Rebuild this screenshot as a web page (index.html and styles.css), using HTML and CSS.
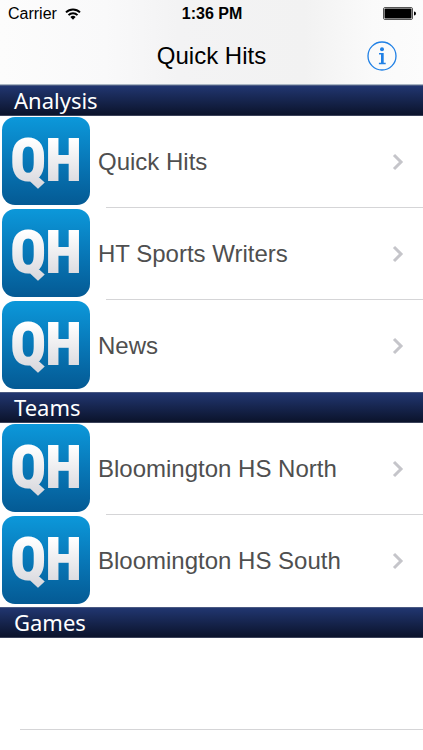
FILE: index.html
```html
<!DOCTYPE html>
<html lang="en">
<head>
<meta charset="utf-8">
<meta name="viewport" content="width=device-width, initial-scale=1">
<title>Quick Hits</title>
<link rel="stylesheet" href="styles.css">
</head>
<body>
<svg class="defs" aria-hidden="true">
  <defs>
    <linearGradient id="tile" x1="0" y1="0" x2="0" y2="1">
      <stop offset="0" stop-color="#0c98da"/>
      <stop offset="0.5" stop-color="#0878b8"/>
      <stop offset="1" stop-color="#045a94"/>
    </linearGradient>
    <linearGradient id="letters" x1="0" y1="0" x2="0" y2="1">
      <stop offset="0.2" stop-color="#ffffff"/>
      <stop offset="1" stop-color="#d2d2d8"/>
    </linearGradient>
    <symbol id="logo" viewBox="0 0 88 88">
      <rect width="88" height="88" rx="13" fill="url(#tile)"/>
      <text class="logo-text" x="44" y="63" text-anchor="middle" fill="url(#letters)" stroke="url(#letters)" stroke-width="2">QH</text>
    </symbol>
    <symbol id="chevron" viewBox="0 0 12 18">
      <path d="M2 2 9 9 2 16" fill="none" stroke="#c5c5ca" stroke-width="3"/>
    </symbol>
  </defs>
</svg>
<header class="top">
  <div class="status">
    <div class="carrier">
      <span>Carrier</span>
      <svg class="wifi" viewBox="0 0 16 12" aria-hidden="true">
        <path d="M1 4.4a10 10 0 0 1 14 0M3.5 7.1a6.4 6.4 0 0 1 9 0" fill="none" stroke="#000" stroke-width="2"/>
        <path d="M5.4 9a3.8 3.8 0 0 1 5.2 0L8 11.7Z"/>
      </svg>
    </div>
    <span class="time">1:36 PM</span>
    <svg class="battery" viewBox="0 0 33 13" aria-hidden="true">
      <rect x="0.5" y="0.5" width="29" height="12" rx="1.5" fill="#fff" stroke="#555"/>
      <rect x="1.5" y="1.5" width="27" height="10" rx="1"/>
      <path d="M31 4.5a2 2 0 0 1 0 4Z"/>
    </svg>
  </div>
  <div class="nav">
    <h1>Quick Hits</h1>
    <button class="info" type="button" aria-label="Information">
      <svg viewBox="0 0 30 30" aria-hidden="true" fill="#2080e5">
        <circle cx="15" cy="15" r="14" fill="none" stroke="#2080e5" stroke-width="1.3"/>
        <circle cx="15" cy="8.2" r="2"/>
        <path d="M12 12h4.7v9.8h2v1.4h-6.8v-1.4h2.1v-8.4H12Z"/>
      </svg>
    </button>
  </div>
</header>
<main>
  <section>
    <h2>Analysis</h2>
    <ul>
      <li><a href="#quick-hits"><svg class="logo"><use href="#logo"/></svg><span class="label">Quick Hits</span><svg class="chevron"><use href="#chevron"/></svg></a></li>
      <li><a href="#writers"><svg class="logo"><use href="#logo"/></svg><span class="label">HT Sports Writers</span><svg class="chevron"><use href="#chevron"/></svg></a></li>
      <li><a href="#news"><svg class="logo"><use href="#logo"/></svg><span class="label">News</span><svg class="chevron"><use href="#chevron"/></svg></a></li>
    </ul>
  </section>
  <section>
    <h2>Teams</h2>
    <ul>
      <li><a href="#north"><svg class="logo"><use href="#logo"/></svg><span class="label">Bloomington HS North</span><svg class="chevron"><use href="#chevron"/></svg></a></li>
      <li><a href="#south"><svg class="logo"><use href="#logo"/></svg><span class="label">Bloomington HS South</span><svg class="chevron"><use href="#chevron"/></svg></a></li>
    </ul>
  </section>
  <section>
    <h2>Games</h2>
    <div class="blank"></div>
  </section>
</main>
</body>
</html>
```
FILE: styles.css
```css
* { box-sizing: border-box; }

body {
  margin: 0;
  background: #fff;
  color: #000;
  font-family: "Liberation Sans", Arial, sans-serif;
}

h1, h2, ul { margin: 0; padding: 0; font-weight: 400; }
svg { display: block; flex: none; }
.defs { position: absolute; width: 0; height: 0; }

.top {
  background: linear-gradient(90deg, #fcfcfc 0%, #f9f9fa 25%, #f3f3f4 42%, #f2f2f2 72%, #fafafa 88%, #fcfcfc 100%);
  border-bottom: 1px solid #a9b6c4;
}

.status {
  display: grid;
  grid-template-columns: 1fr auto 1fr;
  align-items: center;
  height: 27px;
  padding: 0 7px 0 8px;
  font-size: 16px;
  line-height: 18px;
}
.carrier { display: flex; align-items: center; gap: 8px; }
.wifi { width: 16px; height: 12px; }
.time { font-weight: 700; }
.battery { width: 33px; height: 13px; justify-self: end; }

.nav {
  display: grid;
  grid-template-columns: 1fr auto 1fr;
  align-items: center;
  height: 57px;
  padding: 0 26px;
}
h1 { grid-column: 2; font-size: 24px; line-height: 28px; }
.info {
  justify-self: end;
  width: 30px;
  height: 30px;
  padding: 0;
  border: 0;
  background: none;
}

h2 {
  padding-left: 14px;
  background: linear-gradient(#213670, #0b132b);
  border-top: 1px solid #4a5982;
  border-bottom: 1px solid #3b425a;
  color: #fff;
  font-family: "Noto Sans", sans-serif;
  font-size: 22px;
  line-height: 29px;
}

ul { list-style: none; }
a {
  display: flex;
  position: relative;
  align-items: center;
  height: 92px;
  padding: 0 19px 0 2px;
  color: #4f4f4f;
  text-decoration: none;
}
li:not(:last-child) a::after {
  content: "";
  position: absolute;
  right: 0;
  bottom: 0;
  left: 106px;
  height: 1px;
  background: #d5d5d7;
}
.logo { width: 88px; height: 88px; margin-bottom: 2px; }
.logo-text {
  font-family: "Liberation Sans Narrow", "Roboto Condensed", "DejaVu Sans Condensed", sans-serif;
  font-size: 58px;
  font-weight: 700;
}
.label { flex: 1; margin-left: 8px; font-size: 24px; line-height: 28px; }
.chevron { width: 12px; height: 18px; }

.blank {
  height: 92px;
  margin-left: 20px;
  border-bottom: 1px solid #d5d5d7;
}
```
